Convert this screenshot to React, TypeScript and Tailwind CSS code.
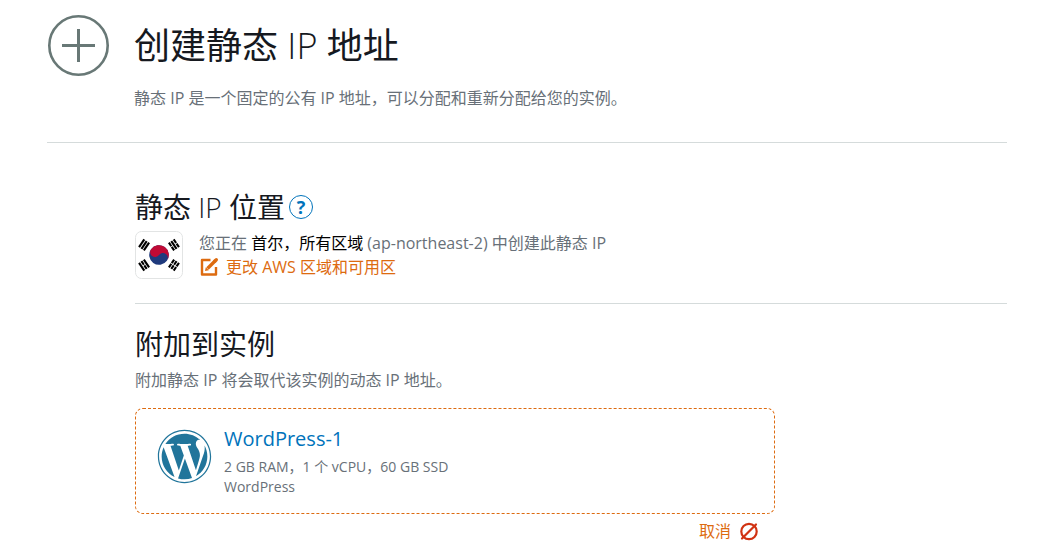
import React from "react";
import { FaWordpress } from "react-icons/fa";

function PlusCircle() {
  return (
    <svg viewBox="0 0 62 62" className="block size-[62px] shrink-0" fill="none" stroke="#687876" aria-hidden="true">
      <circle cx="30.5" cy="30.5" r="29.2" strokeWidth="2.6" />
      <path d="M30.5 14V47M14 30.5H47" strokeWidth="3" />
    </svg>
  );
}

function Trigram({ angle, bars }: { angle: number; bars: boolean[] }) {
  return (
    <g transform={`rotate(${angle}) translate(18 0)`}>
      {bars.map((broken, i) => {
        const x = (i - 1) * 2.9;
        return (
          <path key={i} d={broken ? `M${x} -4.7V-0.4M${x} 0.4V4.7` : `M${x} -4.7V4.7`} stroke="#000" strokeWidth="2.1" />
        );
      })}
    </g>
  );
}

function KoreaFlag() {
  return (
    <svg viewBox="-24 -24 48 48" className="block size-12 shrink-0" role="img" aria-label="KR">
      <rect x="-23.5" y="-23.5" width="47" height="47" rx="6" fill="#fff" stroke="#e2e4e4" />
      <g transform="rotate(36)">
        <circle r="9.8" fill="#1f3a7d" />
        <path d="M-9.8 0A9.8 9.8 0 0 1 9.8 0A4.9 4.9 0 0 0 0 0A4.9 4.9 0 0 1 -9.8 0Z" fill="#c00a35" />
      </g>
      <Trigram angle={-146} bars={[false, false, false]} />
      <Trigram angle={146} bars={[false, true, false]} />
      <Trigram angle={-34} bars={[true, false, true]} />
      <Trigram angle={34} bars={[true, true, true]} />
    </svg>
  );
}

function EditIcon() {
  return (
    <svg viewBox="0 0 20 20" className="block size-5 shrink-0" fill="none" stroke="#dd6b10" aria-hidden="true">
      <path d="M11.5 3H3V17.5H17V10" strokeWidth="2.4" strokeLinejoin="round" />
      <path d="M8.5 11.5L16.5 3.5" strokeWidth="3.4" />
      <path d="M16 4L17.3 2.7" strokeWidth="3.4" strokeLinecap="round" />
      <path d="M6 14L6.8 10.2L9.8 13.2Z" fill="#dd6b10" stroke="none" />
    </svg>
  );
}

function CancelIcon() {
  return (
    <svg viewBox="0 0 20 20" className="block size-5 shrink-0" fill="none" stroke="#d13212" aria-hidden="true">
      <circle cx="10" cy="10.5" r="7.7" strokeWidth="2.2" />
      <path d="M3 17.5L17 3.5" strokeWidth="2.2" strokeLinecap="round" />
    </svg>
  );
}

export default function App() {
  return (
    <main className="min-h-screen bg-white pr-[51px] pl-[47px] pt-[15px] font-['Open_Sans','Noto_Sans_CJK_SC',sans-serif] text-base leading-6 text-[#687078]">
      <header className="flex gap-6 border-b border-[#d5dbdb] pb-8 pl-px">
        <PlusCircle />
        <div>
          <h1 className="pt-1 text-4xl leading-[54px] text-[#16191f]">
            创建静态 <span className="font-light">IP</span> 地址
          </h1>
          <p className="mt-[13px]">静态 IP 是一个固定的公有 IP 地址，可以分配和重新分配给您的实例。</p>
        </div>
      </header>

      <div className="pl-[88px]">
        <section className="border-b border-[#d5dbdb] pt-11 pb-6">
          <div className="flex items-center gap-1">
            <h2 className="text-[28px] leading-10 text-[#16191f]">
              静态 <span className="font-light">IP</span> 位置
            </h2>
            <button
              type="button"
              aria-label="?"
              className="flex size-6 items-center justify-center rounded-full border border-[#0073bb] text-lg font-bold leading-none text-[#0073bb]"
            >
              ?
            </button>
          </div>
          <div className="mt-1 flex gap-4">
            <KoreaFlag />
            <div>
              <p>
                您正在 <span className="text-black">首尔，所有区域</span> <span className="font-medium">(ap-northeast-2)</span> 中创建此静态 IP
              </p>
              <a href="#region" className="flex items-center gap-[7px] text-[#dd6b10]">
                <EditIcon />
                更改 AWS 区域和可用区
              </a>
            </div>
          </div>
        </section>

        <section className="w-[640px] max-w-full pt-5">
          <h2 className="text-[28px] leading-10 text-[#16191f]">附加到实例</h2>
          <p className="mt-1">附加静态 IP 将会取代该实例的动态 IP 地址。</p>
          <article className="mt-4 flex items-start gap-3 rounded-lg border border-dashed border-[#dd6b10] px-[21px] py-4">
            <FaWordpress className="mt-1 size-[55px] shrink-0 text-[#21759b]" aria-hidden="true" />
            <div className="text-sm leading-5">
              <h3 className="mb-1 text-xl leading-7">
                <a href="#instance" className="text-[#0073bb]">WordPress-1</a>
              </h3>
              <p>2 GB RAM，1 个 vCPU，60 GB SSD</p>
              <p>WordPress</p>
            </div>
          </article>
          <div className="flex justify-end pt-[5px] pr-4">
            <button type="button" className="flex items-center gap-2 text-[#dd6b10]">
              取消
              <CancelIcon />
            </button>
          </div>
        </section>
      </div>
    </main>
  );
}
